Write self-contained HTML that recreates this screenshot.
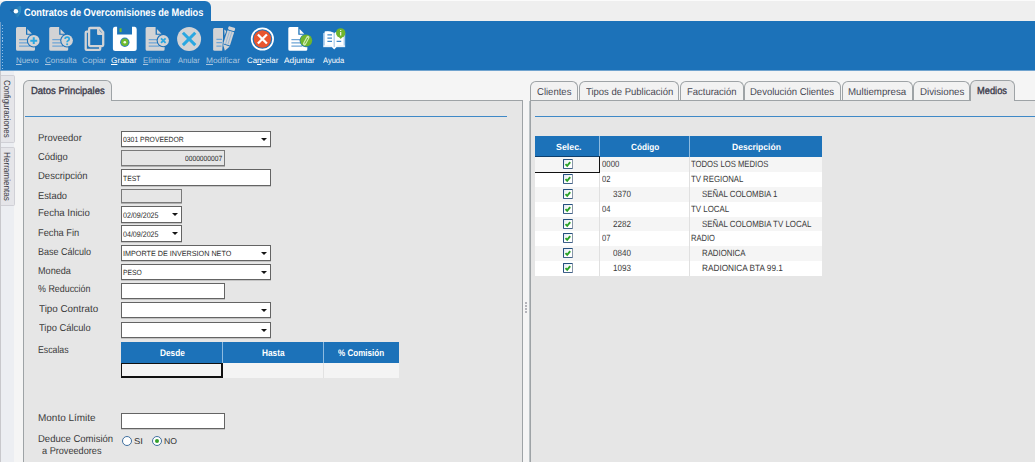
<!DOCTYPE html>
<html>
<head>
<meta charset="utf-8">
<title>Contratos de Overcomisiones de Medios</title>
<style>
*{box-sizing:border-box;margin:0;padding:0}
html,body{width:1035px;height:462px;overflow:hidden;background:#efefef;font-family:"Liberation Sans",sans-serif;text-rendering:geometricPrecision}
body{position:relative}
div,svg{position:absolute}
.t{white-space:nowrap;transform-origin:0 50%}
.t u{text-decoration:underline}
#wtab{left:0;top:1px;width:211px;height:22px;background:#1c72b9;border-radius:6px 6px 0 0}
#toolbar{left:0;top:21px;width:1035px;height:49px;background:#1c72b9}
.side{left:1px;width:14px;background:#e5e5e9;border:1px solid #d0d0d6;border-left:none;border-radius:0 2px 2px 0}
.panel{background:#e6e6e6;border:1px solid #9ea3a6}
.tab{border:1px solid #9ea3a6;border-bottom:none;border-radius:6px 6px 0 0;background:#f2f2f2}
.tab.sel{background:#e6e6e6}
.fld{left:121px;height:16px;background:#fff;border:1px solid #646464;box-shadow:0 1px 0 #c4c4c4}
.fld.ro{background:#e6e6e6;border-color:#7a7a7a;box-shadow:0 1px 0 #b0b0b0}
.arr{width:0;height:0;border-left:3.1px solid transparent;border-right:3.1px solid transparent;border-top:3.5px solid #151515}
.hline{height:1px;background:#3f89c7}
.gh{background:#1c72b9}
.cb{width:10px;height:10px;background:linear-gradient(135deg,#dfe7f0 0%,#fff 55%);border:1px solid;border-color:#24507f #8796a8 #41628a #24507f;border-radius:1px}
</style>
</head>
<body>

<div id="wtab"></div><div id="toolbar"></div><div style="left:0;top:70px;width:1035px;height:1px;background:#71a4cf"></div>
<div class="t" style="left:23.60px;top:5px;font-size:10.75px;line-height:17px;color:#fff;font-weight:bold;transform:scaleX(0.8606);">Contratos de Overcomisiones de Medios</div>
<svg style="left:8px;top:4px" width="15" height="15" viewBox="8 4 15 15"><defs><linearGradient id="tg" x1="0" y1="0" x2="1" y2="0"><stop offset="0" stop-color="#175c9c"/><stop offset="1" stop-color="#2f90c8"/></linearGradient></defs><path d="M10.3,10.4 L19.6,6.6 Q20.8,6.2 20.7,7.5 L20.2,12.5 L17.8,16.6 Q17.2,17.5 16.4,16.8 Z" fill="url(#tg)" stroke="url(#tg)" stroke-width="1" stroke-linejoin="round"/><circle cx="15.9" cy="11.2" r="2.25" fill="#fff"/></svg>
<div style="left:2.2px;top:24.7px;width:1.2px;height:44px;background:repeating-linear-gradient(#94bfe6 0 1.1px,transparent 1.1px 3.1px)"></div><div style="left:0;top:22px;width:1px;height:49px;background:#6c9bc7"></div>
<div class="t" style="left:16.20px;top:54px;font-size:8px;line-height:13px;color:#a9c5df;transform:scaleX(0.9774);"><u>N</u>uevo</div>
<div class="t" style="left:44.90px;top:54px;font-size:8px;line-height:13px;color:#a9c5df;transform:scaleX(1.0009);"><u>C</u>onsulta</div>
<div class="t" style="left:81.70px;top:54px;font-size:8px;line-height:13px;color:#a9c5df;transform:scaleX(1.0185);">Copiar</div>
<div class="t" style="left:111.30px;top:54px;font-size:8px;line-height:13px;color:#fff;transform:scaleX(1.0323);"><u>G</u>rabar</div>
<div class="t" style="left:142.60px;top:54px;font-size:8px;line-height:13px;color:#a9c5df;transform:scaleX(0.9760);"><u>E</u>liminar</div>
<div class="t" style="left:177.80px;top:54px;font-size:8px;line-height:13px;color:#a9c5df;transform:scaleX(0.9428);">Anular</div>
<div class="t" style="left:206.20px;top:54px;font-size:8px;line-height:13px;color:#a9c5df;transform:scaleX(1.0446);"><u>M</u>odificar</div>
<div class="t" style="left:246.50px;top:54px;font-size:8px;line-height:13px;color:#fff;transform:scaleX(0.9777);">Ca<u>n</u>celar</div>
<div class="t" style="left:284.40px;top:54px;font-size:8px;line-height:13px;color:#fff;transform:scaleX(1.0337);">Ad<u>j</u>untar</div>
<div class="t" style="left:322.70px;top:54px;font-size:8px;line-height:13px;color:#fff;transform:scaleX(0.9407);">Ayuda</div>
<svg style="left:0;top:21px;overflow:visible" width="360" height="49" viewBox="0 21 360 49">
<defs>
<path id="doc" d="M1.5,0 H10 V7.8 H17 V17 H19 V22.4 Q19,23.75 17.6,23.75 H1.5 Q0,23.75 0,22.25 V1.5 Q0,0 1.5,0 Z M11.3,1.9 L15.9,6.7 H11.3 Z"/>
<g id="lines" stroke="#6ea5d6" stroke-width="1.2" fill="none"><path d="M3.1,12.6 H13 M3.1,15.8 H13 M3.1,19.1 H14"/></g>
</defs>
<!-- Nuevo -->
<g transform="translate(16,27)"><use href="#doc" fill="#d2d3d5"/><use href="#lines"/>
<circle cx="17.75" cy="13.7" r="6.9" fill="#1c72b9"/><circle cx="17.75" cy="13.7" r="5.8" fill="#d2d3d5"/>
<path d="M14.3,13.7 H21.2 M17.75,10.3 V17.1" stroke="#2aa7e1" stroke-width="2" fill="none"/></g>
<!-- Consulta -->
<g transform="translate(49.2,27)"><use href="#doc" fill="#d2d3d5"/><use href="#lines"/>
<circle cx="17.9" cy="13.6" r="6.9" fill="#1c72b9"/><circle cx="17.9" cy="13.6" r="5.8" fill="#d2d3d5"/>
<path d="M15.9,12.1 Q15.9,10.2 17.9,10.2 Q20,10.2 20,12 Q20,13.2 18.8,13.8 Q17.9,14.3 17.9,15.3" stroke="#2aa7e1" stroke-width="1.7" fill="none"/><circle cx="17.9" cy="17.3" r="1" fill="#2aa7e1"/></g>
<!-- Copiar -->
<g fill="none" stroke="#d2d3d5" stroke-width="2.3" stroke-linejoin="round">
<path d="M88.3,31.7 H86.7 Q85.7,31.7 85.7,32.7 V48.9 Q85.7,49.9 86.7,49.9 H99.2 Q100.2,49.9 100.2,48.9 V47"/>
<path d="M90.1,28 H99.6 L103.2,32.2 V45.1 Q103.2,46.1 102.2,46.1 H90.1 Q89.1,46.1 89.1,45.1 V29 Q89.1,28 90.1,28 Z"/>
<path d="M98.2,28.2 V33.9 H103"/>
</g>
<path d="M98.6,29.4 L102.4,33.4 H98.6 Z" fill="#d2d3d5"/>
<!-- Grabar -->
<path d="M114.9,26.8 H117.1 V34.6 H132 V26.8 H134.7 Q136.7,26.8 136.7,29.3 V48.5 Q136.7,51 134.2,51 H115.4 Q112.9,51 112.9,48.5 V29.3 Q112.9,26.8 114.9,26.8 Z" fill="#fff"/>
<rect x="119.5" y="28.3" width="2.1" height="3.8" fill="#6fba2c"/>
<circle cx="124.8" cy="42.3" r="4.7" fill="#2f7fc1"/><circle cx="124.8" cy="42.3" r="3.7" fill="#6fba2c"/><circle cx="124.8" cy="42.3" r="1.3" fill="#f2fbe8"/>
<!-- Eliminar -->
<g transform="translate(145.6,27)"><use href="#doc" fill="#d2d3d5"/><use href="#lines"/>
<circle cx="17.7" cy="13.6" r="6.7" fill="#1c72b9"/><circle cx="17.7" cy="13.6" r="5.6" fill="#d2d3d5"/>
<path d="M15.4,11.3 L20,15.9 M20,11.3 L15.4,15.9" stroke="#2aa7e1" stroke-width="1.8" fill="none"/></g>
<!-- Anular -->
<circle cx="189.1" cy="38.9" r="12" fill="#d2d3d5"/>
<path d="M182.9,32.7 L195.3,45.1 M195.3,32.7 L182.9,45.1" stroke="#2aa7e1" stroke-width="3" fill="none"/>
<!-- Modificar -->
<path d="M214.6,27.9 H223 V38.5 L222.2,50.8 H214.6 Q213.1,50.8 213.1,49.3 V29.4 Q213.1,27.9 214.6,27.9 Z" fill="#d2d3d5"/>
<path d="M224.2,29.6 L226.3,31 L224.6,35.6 Z" fill="#d2d3d5"/>
<path d="M216.4,39.4 H222 M216.4,42.7 H222 M216.4,46.1 H221.5" stroke="#6ea5d6" stroke-width="1.2" fill="none"/>
<g transform="translate(231.6,28.7) rotate(17.5)">
<rect x="-3.5" y="-1.7" width="7" height="3.4" rx="1.2" fill="#d2d3d5"/>
<rect x="-3.5" y="2.6" width="7" height="14" fill="#d2d3d5"/>
<path d="M-1.2,3.2 V16.4 M1.2,3.2 V16.4" stroke="#86b0d8" stroke-width=".7"/>
<path d="M-3.5,17.5 H3.5 L0.2,23 Z" fill="#d2d3d5"/>
</g>
<!-- Cancelar -->
<circle cx="262.4" cy="39" r="10.7" fill="none" stroke="#fff" stroke-width="1.7"/>
<circle cx="262.4" cy="39" r="8.7" fill="#e9562f"/>
<path d="M257.9,34.5 L266.9,43.5 M266.9,34.5 L257.9,43.5" stroke="#fff" stroke-width="2.3" fill="none"/>
<!-- Adjuntar -->
<g transform="translate(288.3,27)"><use href="#doc" fill="#fff"/><use href="#lines"/>
<circle cx="17.9" cy="13.6" r="6.6" fill="#1c72b9"/><circle cx="17.9" cy="13.6" r="6" fill="#6fb52d"/>
<path d="M19.6,10.4 L16.2,16.8" stroke="#cfe9b4" stroke-width="3.2" stroke-linecap="round" fill="none"/>
<path d="M19.3,11.2 L16.6,16.2" stroke="#6fb52d" stroke-width="1" stroke-linecap="round" fill="none"/></g>
<!-- Ayuda -->
<path d="M323.1,33.2 L324.8,32.6 V31.6 Q329.5,30.6 333.4,32.6 L334.2,33.2 L335,32.6 Q339,30.6 343.6,31.6 V32.6 L345.2,33.2 V47.2 H336.5 L334.2,49.6 L331.9,47.2 H323.1 Z" fill="#a9cbea"/>
<path d="M324.8,31.6 Q329.5,30.4 333.6,32.8 V46.6 Q329.5,45 324.8,45.8 Z" fill="#fff"/>
<path d="M334.8,32.8 Q339,30.4 343.6,31.6 V45.8 Q339,45 334.8,46.6 Z" fill="#fff"/>
<path d="M323.6,46.2 H332.3 L334.2,48.2 L336.1,46.2 H344.8" stroke="#fff" stroke-width="1.3" fill="none"/>
<path d="M327.4,34.9 H332 M327.4,38.1 H332 M327.4,41.4 H332 M336.6,41.4 H341.2" stroke="#3f88c8" stroke-width="1.2" fill="none"/>
<path d="M338.6,36.4 L340.7,39 L342.8,36.4 Z" fill="#6fb52d"/>
<circle cx="340.7" cy="32.9" r="4.7" fill="#6fb52d"/>
<path d="M340.7,30 V30.9 M340.7,32 V35.6" stroke="#fff" stroke-width="1.1" fill="none"/>
</svg>

<div style="left:0;top:0;width:1035px;height:1px;background:#fbfbfb"></div>
<div style="left:0;top:71px;width:1035px;height:391px;background:#f5f5f5"></div><div style="left:0;top:71px;width:14px;height:391px;background:#eceef2"></div><div style="left:0;top:71px;width:1px;height:391px;background:#c8c8cc"></div>
<div class="side" style="top:75px;height:68px"></div><div class="side" style="top:147px;height:59px"></div>
<div class="t" style="left:12.6px;top:79.7px;font-size:9px;line-height:12px;color:#3a3a44;transform-origin:0 0;transform:rotate(90deg) scaleX(0.8872)">Configuraciones</div>
<div class="t" style="left:12.6px;top:151.8px;font-size:9px;line-height:12px;color:#3a3a44;transform-origin:0 0;transform:rotate(90deg) scaleX(0.9053)">Herramientas</div>
<div class="panel" style="left:23px;top:100px;width:500px;height:370px"></div>
<div class="tab sel" style="left:23px;top:80px;width:89px;height:21px"></div>
<div class="t" style="left:30.80px;top:84px;font-size:10.25px;line-height:16px;color:#3a3a4a;transform:scaleX(0.9241);-webkit-text-stroke:.35px #3a3a4a;">Datos Principales</div>
<div class="hline" style="left:25px;top:116px;width:482px"></div>
<div style="left:525px;top:302px;width:2px;height:11px;background:repeating-linear-gradient(#b4b4ba 0 2px,transparent 2px 3px)"></div>
<div class="t" style="left:38.20px;top:131px;font-size:10px;line-height:16px;color:#3a3a3a;transform:scaleX(0.9494);">Proveedor</div>
<div class="t" style="left:38.20px;top:150px;font-size:10px;line-height:16px;color:#3a3a3a;transform:scaleX(0.9373);">Código</div>
<div class="t" style="left:38.20px;top:169px;font-size:10px;line-height:16px;color:#3a3a3a;transform:scaleX(0.9495);">Descripción</div>
<div class="t" style="left:38.20px;top:189px;font-size:10px;line-height:16px;color:#3a3a3a;transform:scaleX(0.9315);">Estado</div>
<div class="t" style="left:38.20px;top:206px;font-size:10px;line-height:16px;color:#3a3a3a;transform:scaleX(0.9608);">Fecha Inicio</div>
<div class="t" style="left:38.20px;top:226px;font-size:10px;line-height:16px;color:#3a3a3a;transform:scaleX(0.9267);">Fecha Fin</div>
<div class="t" style="left:38.20px;top:245px;font-size:10px;line-height:16px;color:#3a3a3a;transform:scaleX(0.9012);">Base Cálculo</div>
<div class="t" style="left:38.20px;top:264px;font-size:10px;line-height:16px;color:#3a3a3a;transform:scaleX(0.9105);">Moneda</div>
<div class="t" style="left:38.20px;top:282px;font-size:10px;line-height:16px;color:#3a3a3a;transform:scaleX(0.8894);">% Reducción</div>
<div class="t" style="left:39.00px;top:302px;font-size:10px;line-height:16px;color:#3a3a3a;transform:scaleX(0.9832);">Tipo Contrato</div>
<div class="t" style="left:38.90px;top:321px;font-size:10px;line-height:16px;color:#3a3a3a;transform:scaleX(0.9347);">Tipo Cálculo</div>
<div class="t" style="left:38.30px;top:343px;font-size:10px;line-height:16px;color:#3a3a3a;transform:scaleX(0.8739);">Escalas</div>
<div class="t" style="left:38.30px;top:411px;font-size:10px;line-height:16px;color:#3a3a3a;transform:scaleX(0.9966);">Monto Límite</div>
<div class="t" style="left:38.30px;top:432px;font-size:10px;line-height:16px;color:#3a3a3a;transform:scaleX(0.9516);">Deduce Comisión</div>
<div class="t" style="left:41.80px;top:444px;font-size:10px;line-height:16px;color:#3a3a3a;transform:scaleX(0.9149);">a Proveedores</div>
<div class="fld" style="top:131px;width:150px;height:16px"></div><div class="arr" style="left:261.1px;top:137.6px"></div><div class="t" style="left:123.20px;top:134px;font-size:7.5px;line-height:12px;color:#2a2a2a;transform:scaleX(0.9116);">0301 PROVEEDOR</div>
<div class="fld ro" style="top:150px;width:104px;height:16px"></div><div class="t" style="left:184.80px;top:153px;font-size:7.5px;line-height:12px;color:#2a2a2a;transform:scaleX(0.8895);">0000000007</div>
<div class="fld" style="top:169px;width:150px;height:17px"></div><div class="t" style="left:123.40px;top:173px;font-size:7.5px;line-height:12px;color:#2a2a2a;transform:scaleX(0.9026);">TEST</div>
<div class="fld ro" style="top:189px;width:61px;height:14px"></div>
<div class="fld" style="top:206px;width:61px;height:17px"></div><div class="arr" style="left:172.1px;top:212.6px"></div><div class="t" style="left:123.20px;top:209px;font-size:8px;line-height:13px;color:#2a2a2a;transform:scaleX(0.8867);">02/09/2025</div>
<div class="fld" style="top:225px;width:61px;height:17px"></div><div class="arr" style="left:172.1px;top:231.6px"></div><div class="t" style="left:123.20px;top:228px;font-size:8px;line-height:13px;color:#2a2a2a;transform:scaleX(0.8867);">04/09/2025</div>
<div class="fld" style="top:245px;width:150px;height:16px"></div><div class="arr" style="left:261.1px;top:251.6px"></div><div class="t" style="left:123.20px;top:248px;font-size:7.5px;line-height:12px;color:#2a2a2a;transform:scaleX(0.9613);">IMPORTE DE INVERSION NETO</div>
<div class="fld" style="top:264px;width:150px;height:16px"></div><div class="arr" style="left:261.1px;top:270.6px"></div><div class="t" style="left:123.20px;top:267px;font-size:7.5px;line-height:12px;color:#2a2a2a;transform:scaleX(0.9020);">PESO</div>
<div class="fld" style="top:283px;width:104px;height:16px"></div>
<div class="fld" style="top:302px;width:150px;height:16px"></div><div class="arr" style="left:261.1px;top:308.6px"></div>
<div class="fld" style="top:322px;width:150px;height:16px"></div><div class="arr" style="left:261.1px;top:328.6px"></div>
<div class="fld" style="top:413px;width:104px;height:16px"></div>
<div class="gh" style="left:121px;top:342px;width:278px;height:21px"></div>
<div style="left:222px;top:342px;width:1px;height:21px;background:#8dbbe0"></div><div style="left:323px;top:342px;width:1px;height:21px;background:#8dbbe0"></div>
<div style="left:121px;top:363px;width:278px;height:15px;background:#f4f4f4"></div>
<div style="left:222px;top:363px;width:1px;height:15px;background:#e2e2e2"></div><div style="left:323px;top:363px;width:1px;height:15px;background:#e2e2e2"></div>
<div style="left:121px;top:363px;width:102px;height:15px;border:1px solid #111;border-right-width:2px;border-bottom-width:2px"></div>
<div class="t" style="left:159.90px;top:346px;font-size:9.5px;line-height:15px;color:#fff;font-weight:bold;transform:scaleX(0.8698);">Desde</div>
<div class="t" style="left:262.30px;top:346px;font-size:9.5px;line-height:15px;color:#fff;font-weight:bold;transform:scaleX(0.8696);">Hasta</div>
<div class="t" style="left:338.40px;top:346px;font-size:9.5px;line-height:15px;color:#fff;font-weight:bold;transform:scaleX(0.8480);">% Comisión</div>
<div style="left:122px;top:436px;width:10px;height:10px;border-radius:50%;border:1px solid #3f6f9f;background:#fff"></div>
<div style="left:152px;top:436px;width:10px;height:10px;border-radius:50%;border:1px solid #3f6f9f;background:#fff"></div>
<div style="left:155px;top:439px;width:4px;height:4px;border-radius:50%;background:#35a02c"></div>
<div class="t" style="left:134.00px;top:434px;font-size:8.5px;line-height:14px;color:#333;transform:scaleX(1.1206);">SI</div>
<div class="t" style="left:164.00px;top:434px;font-size:8.5px;line-height:14px;color:#333;transform:scaleX(1.0196);">NO</div>
<div class="panel" style="left:530px;top:100px;width:510px;height:370px"></div><div style="left:529px;top:101px;width:1px;height:361px;background:#bcc3c6"></div>
<div class="tab" style="left:530px;top:81px;width:48px;height:19px"></div>
<div class="t" style="left:537.30px;top:85px;font-size:10px;line-height:16px;color:#484852;transform:scaleX(0.9522);">Clientes</div>
<div class="tab" style="left:579px;top:81px;width:100px;height:19px"></div>
<div class="t" style="left:586.00px;top:85px;font-size:10px;line-height:16px;color:#484852;transform:scaleX(0.9489);">Tipos de Publicación</div>
<div class="tab" style="left:680px;top:81px;width:64px;height:19px"></div>
<div class="t" style="left:686.70px;top:85px;font-size:10px;line-height:16px;color:#484852;transform:scaleX(0.9475);">Facturación</div>
<div class="tab" style="left:744px;top:81px;width:97px;height:19px"></div>
<div class="t" style="left:750.30px;top:85px;font-size:10px;line-height:16px;color:#484852;transform:scaleX(0.9505);">Devolución Clientes</div>
<div class="tab" style="left:842px;top:81px;width:71px;height:19px"></div>
<div class="t" style="left:847.80px;top:85px;font-size:10px;line-height:16px;color:#484852;transform:scaleX(0.9697);">Multiempresa</div>
<div class="tab" style="left:913px;top:81px;width:57px;height:19px"></div>
<div class="t" style="left:919.50px;top:85px;font-size:10px;line-height:16px;color:#484852;transform:scaleX(0.9743);">Divisiones</div>
<div class="tab sel" style="left:970px;top:80px;width:45px;height:21px"></div>
<div class="t" style="left:977.40px;top:84px;font-size:10.25px;line-height:16px;color:#3a3a4a;transform:scaleX(0.9080);-webkit-text-stroke:.35px #3a3a4a;">Medios</div>
<div class="hline" style="left:535px;top:116px;width:500px"></div>
<div class="gh" style="left:535px;top:136px;width:287px;height:21px"></div>
<div style="left:599px;top:136px;width:1px;height:21px;background:#8dbbe0"></div><div style="left:689px;top:136px;width:1px;height:21px;background:#8dbbe0"></div>
<div class="t" style="left:556.40px;top:140px;font-size:9px;line-height:14px;color:#fff;font-weight:bold;transform:scaleX(0.9801);">Selec.</div>
<div class="t" style="left:630.70px;top:140px;font-size:9px;line-height:14px;color:#fff;font-weight:bold;transform:scaleX(0.9100);">Código</div>
<div class="t" style="left:731.60px;top:140px;font-size:9px;line-height:14px;color:#fff;font-weight:bold;transform:scaleX(0.9493);">Descripción</div>
<div style="left:535px;top:157px;width:287px;height:15px;background:#f5f5f5"></div>
<div class="cb" style="left:563px;top:159px"></div>
<svg style="left:564px;top:160px" width="8" height="8" viewBox="0 0 8 8"><path d="M1.5 4.1 L3.2 5.9 L6.2 2.2" fill="none" stroke="#2aa228" stroke-width="1.9"/></svg>
<div class="t" style="left:602.00px;top:157px;font-size:9px;line-height:14px;color:#3a3a3a;transform:scaleX(0.8642);">0000</div>
<div class="t" style="left:691.20px;top:157px;font-size:9px;line-height:14px;color:#3a3a3a;transform:scaleX(0.8556);">TODOS LOS MEDIOS</div>
<div style="left:535px;top:172px;width:287px;height:15px;background:#fff"></div>
<div class="cb" style="left:563px;top:174px"></div>
<svg style="left:564px;top:175px" width="8" height="8" viewBox="0 0 8 8"><path d="M1.5 4.1 L3.2 5.9 L6.2 2.2" fill="none" stroke="#2aa228" stroke-width="1.9"/></svg>
<div class="t" style="left:602.00px;top:172px;font-size:9px;line-height:14px;color:#3a3a3a;transform:scaleX(0.8392);">02</div>
<div class="t" style="left:691.20px;top:172px;font-size:9px;line-height:14px;color:#3a3a3a;transform:scaleX(0.8659);">TV REGIONAL</div>
<div style="left:535px;top:187px;width:287px;height:15px;background:#f5f5f5"></div>
<div class="cb" style="left:563px;top:189px"></div>
<svg style="left:564px;top:190px" width="8" height="8" viewBox="0 0 8 8"><path d="M1.5 4.1 L3.2 5.9 L6.2 2.2" fill="none" stroke="#2aa228" stroke-width="1.9"/></svg>
<div class="t" style="left:612.50px;top:187px;font-size:9px;line-height:14px;color:#3a3a3a;transform:scaleX(0.8941);">3370</div>
<div class="t" style="left:701.70px;top:187px;font-size:9px;line-height:14px;color:#3a3a3a;transform:scaleX(0.8759);">SEÑAL COLOMBIA 1</div>
<div style="left:535px;top:202px;width:287px;height:15px;background:#fff"></div>
<div class="cb" style="left:563px;top:204px"></div>
<svg style="left:564px;top:205px" width="8" height="8" viewBox="0 0 8 8"><path d="M1.5 4.1 L3.2 5.9 L6.2 2.2" fill="none" stroke="#2aa228" stroke-width="1.9"/></svg>
<div class="t" style="left:602.00px;top:202px;font-size:9px;line-height:14px;color:#3a3a3a;transform:scaleX(0.8392);">04</div>
<div class="t" style="left:691.20px;top:202px;font-size:9px;line-height:14px;color:#3a3a3a;transform:scaleX(0.8756);">TV LOCAL</div>
<div style="left:535px;top:217px;width:287px;height:14px;background:#f5f5f5"></div>
<div class="cb" style="left:563px;top:219px"></div>
<svg style="left:564px;top:220px" width="8" height="8" viewBox="0 0 8 8"><path d="M1.5 4.1 L3.2 5.9 L6.2 2.2" fill="none" stroke="#2aa228" stroke-width="1.9"/></svg>
<div class="t" style="left:612.50px;top:217px;font-size:9px;line-height:14px;color:#3a3a3a;transform:scaleX(0.8941);">2282</div>
<div class="t" style="left:701.70px;top:217px;font-size:9px;line-height:14px;color:#3a3a3a;transform:scaleX(0.8776);">SEÑAL COLOMBIA TV LOCAL</div>
<div style="left:535px;top:231px;width:287px;height:15px;background:#fff"></div>
<div class="cb" style="left:563px;top:233px"></div>
<svg style="left:564px;top:234px" width="8" height="8" viewBox="0 0 8 8"><path d="M1.5 4.1 L3.2 5.9 L6.2 2.2" fill="none" stroke="#2aa228" stroke-width="1.9"/></svg>
<div class="t" style="left:602.00px;top:231px;font-size:9px;line-height:14px;color:#3a3a3a;transform:scaleX(0.8392);">07</div>
<div class="t" style="left:691.20px;top:231px;font-size:9px;line-height:14px;color:#3a3a3a;transform:scaleX(0.8420);">RADIO</div>
<div style="left:535px;top:246px;width:287px;height:15px;background:#f5f5f5"></div>
<div class="cb" style="left:563px;top:248px"></div>
<svg style="left:564px;top:249px" width="8" height="8" viewBox="0 0 8 8"><path d="M1.5 4.1 L3.2 5.9 L6.2 2.2" fill="none" stroke="#2aa228" stroke-width="1.9"/></svg>
<div class="t" style="left:612.50px;top:246px;font-size:9px;line-height:14px;color:#3a3a3a;transform:scaleX(0.8941);">0840</div>
<div class="t" style="left:701.70px;top:246px;font-size:9px;line-height:14px;color:#3a3a3a;transform:scaleX(0.8679);">RADIONICA</div>
<div style="left:535px;top:261px;width:287px;height:15px;background:#fff"></div>
<div class="cb" style="left:563px;top:263px"></div>
<svg style="left:564px;top:264px" width="8" height="8" viewBox="0 0 8 8"><path d="M1.5 4.1 L3.2 5.9 L6.2 2.2" fill="none" stroke="#2aa228" stroke-width="1.9"/></svg>
<div class="t" style="left:612.50px;top:261px;font-size:9px;line-height:14px;color:#3a3a3a;transform:scaleX(0.8941);">1093</div>
<div class="t" style="left:701.70px;top:261px;font-size:9px;line-height:14px;color:#3a3a3a;transform:scaleX(0.9155);">RADIONICA BTA 99.1</div>
<div style="left:599px;top:157px;width:1px;height:119px;background:#e0e0e0"></div><div style="left:689px;top:157px;width:1px;height:119px;background:#e0e0e0"></div>
<div style="left:535px;top:156px;width:65px;height:17px;border-top:1px solid #0c3f6e;border-right:1.5px solid #111;border-bottom:1px solid #111"></div>
</body>
</html>
